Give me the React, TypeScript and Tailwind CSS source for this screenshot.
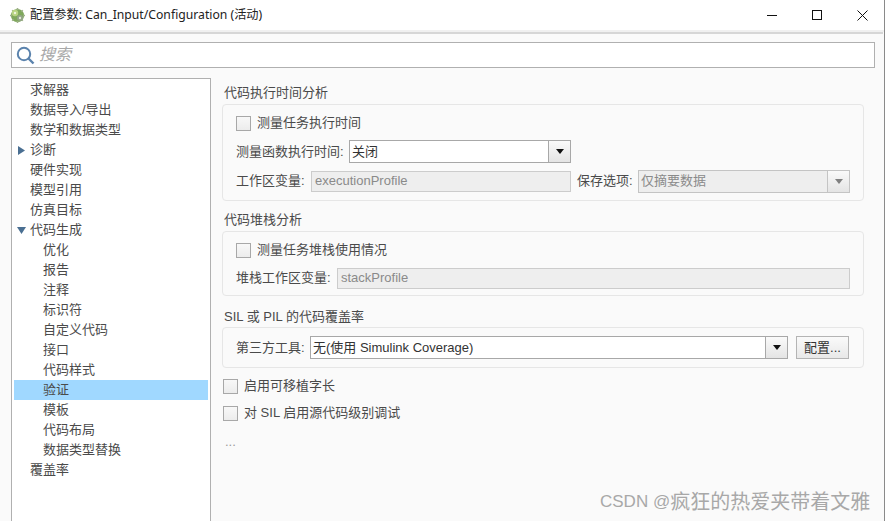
import React from 'react';

const tree = [
  { label: '求解器', level: 0 },
  { label: '数据导入/导出', level: 0 },
  { label: '数学和数据类型', level: 0 },
  { label: '诊断', level: 0, arrow: 'right' },
  { label: '硬件实现', level: 0 },
  { label: '模型引用', level: 0 },
  { label: '仿真目标', level: 0 },
  { label: '代码生成', level: 0, arrow: 'down' },
  { label: '优化', level: 1 },
  { label: '报告', level: 1 },
  { label: '注释', level: 1 },
  { label: '标识符', level: 1 },
  { label: '自定义代码', level: 1 },
  { label: '接口', level: 1 },
  { label: '代码样式', level: 1 },
  { label: '验证', level: 1, selected: true },
  { label: '模板', level: 1 },
  { label: '代码布局', level: 1 },
  { label: '数据类型替换', level: 1 },
  { label: '覆盖率', level: 0 },
];

const Check: React.FC<{ label: string }> = ({ label }) => (
  <div className="flex items-center gap-[6px] h-[16px]">
    <div className="w-[15px] h-[15px] shrink-0 border border-[#a8a8a8] bg-gradient-to-b from-[#f8f8f8] to-[#ececec]"></div>
    <span>{label}</span>
  </div>
);

const Arrow: React.FC<{ disabled?: boolean }> = ({ disabled }) => (
  <div className={`w-[22px] self-stretch border-l flex items-center justify-center bg-gradient-to-b from-[#fafafa] to-[#e4e4e4] ${disabled ? 'border-[#c4c4c4]' : 'border-[#a8a8a8]'}`}>
    <svg width="8" height="5" viewBox="0 0 8 5">
      <path d="M0 0H8L4 5Z" fill={disabled ? '#808080' : '#111111'} />
    </svg>
  </div>
);

const App: React.FC = () => {
  return (
    <div className="relative w-[887px] h-[521px] overflow-hidden flex flex-col bg-[#fafafa] text-[13px] leading-[16px] text-[#4a4a4a] font-['Liberation_Sans','Noto_Sans_CJK_SC',sans-serif]">
      {/* Title bar */}
      <div className="h-[30px] shrink-0 bg-white flex items-center pl-[10px] text-[#222222] font-['Noto_Sans','Noto_Sans_CJK_SC',sans-serif] text-[12.2px]">
        <svg width="15" height="15" viewBox="0 0 15 15" className="mr-[5px]">
          <circle cx="7.5" cy="7.5" r="6.6" fill="#7fa85c" />
          <path d="M7.5 0V2M7.5 13V15M0 7.5H2M13 7.5H15M2.2 2.2L3.6 3.6M11.4 11.4L12.8 12.8M12.8 2.2L11.4 3.6M3.6 11.4L2.2 12.8" stroke="#9db088" strokeWidth="1.6" />
          <circle cx="5" cy="5" r="3.2" fill="#b9d483" />
          <circle cx="10" cy="10" r="3" fill="#93a588" />
          <circle cx="5" cy="5" r="1.2" fill="#eef4dd" />
          <circle cx="10" cy="10" r="1.2" fill="#e4ead8" />
        </svg>
        <span>配置参数: Can_Input/Configuration (活动)</span>
        <div className="ml-auto flex items-center mr-[19px] gap-[35px]">
          <svg width="10" height="10" viewBox="0 0 10 10"><path d="M0 5.5H10" stroke="#111" strokeWidth="1" /></svg>
          <svg width="10" height="10" viewBox="0 0 10 10"><rect x="0.5" y="0.5" width="9" height="9" fill="none" stroke="#111" /></svg>
          <svg width="11" height="11" viewBox="0 0 11 11"><path d="M0.5 0.5L10.5 10.5M10.5 0.5L0.5 10.5" stroke="#111" strokeWidth="1" /></svg>
        </div>
      </div>
      <div className="h-[2px] shrink-0 bg-[#f0f0f0]"></div>
      <div className="h-[2px] shrink-0 bg-[#d6d6d6] mr-[4px]"></div>

      <div className="flex-1 min-h-0 flex flex-col pl-[11px] pr-[12px] pt-[8px]">
        {/* Search */}
        <div className="h-[26px] shrink-0 bg-white border border-[#b0b0b0] flex items-center pl-[4px] italic text-[#a8a8a8] text-[16px]">
          <svg width="19" height="19" viewBox="0 0 19 19" className="mr-[4px]">
            <circle cx="8" cy="8" r="6.2" fill="none" stroke="#5b83ad" strokeWidth="2" />
            <path d="M12.5 12.5L17.5 17.5" stroke="#5b83ad" strokeWidth="2.4" />
          </svg>
          <span>搜索</span>
        </div>

        <div className="flex-1 min-h-0 flex mt-[10px]">
          {/* Tree */}
          <div className="w-[200px] shrink-0 bg-white border border-[#b0b0b0] border-b-0 pt-[1px] pl-[2px] pr-[2px]">
            {tree.map((item) => (
              <div
                key={item.label}
                className={`h-[20px] flex items-center relative ${item.level === 1 ? 'pl-[29px]' : 'pl-[16px]'} ${item.selected ? 'bg-[#a0d8ff]' : ''}`}
              >
                {item.arrow === 'right' && (
                  <svg width="7" height="9" viewBox="0 0 7 9" className="absolute left-[4px] top-[6px]">
                    <path d="M0 0L7 4.5L0 9Z" fill="#4a6f92" />
                  </svg>
                )}
                {item.arrow === 'down' && (
                  <svg width="9" height="7" viewBox="0 0 9 7" className="absolute left-[3px] top-[7px]">
                    <path d="M0 0H9L4.5 7Z" fill="#4a6f92" />
                  </svg>
                )}
                <span>{item.label}</span>
              </div>
            ))}
          </div>

          {/* Right pane */}
          <div className="flex-1 min-w-0 pl-[11px] pr-[11px] pt-[7px]">
            <div className="pl-[2px] h-[16px]">代码执行时间分析</div>
            <div className="mt-[3px] h-[97px] border border-[#e6e6e6] rounded-[4px] pl-[13px] pr-[13px] pt-[10px] flex flex-col">
              <Check label="测量任务执行时间" />
              <div className="flex items-center mt-[9px] h-[23px]">
                <span className="w-[113px] shrink-0">测量函数执行时间:</span>
                <div className="w-[222px] h-[23px] flex items-center bg-white border border-[#a8a8a8] pl-[2px]">
                  <span className="flex-1 text-[#333333]">关闭</span>
                  <Arrow />
                </div>
              </div>
              <div className="flex items-center mt-[7px] h-[22px]">
                <span className="w-[75px] shrink-0">工作区变量:</span>
                <div className="w-[260px] h-[21px] bg-[#eeeeee] border border-[#cccccc] text-[#8a8a8a] pl-[3px] flex items-center">executionProfile</div>
                <span className="ml-[6px] w-[61px] shrink-0">保存选项:</span>
                <div className="w-[212px] h-[23px] flex items-center bg-[#eeeeee] border border-[#c4c4c4] pl-[2px] text-[#8a8a8a]">
                  <span className="flex-1">仅摘要数据</span>
                  <Arrow disabled />
                </div>
              </div>
            </div>

            <div className="pl-[2px] h-[16px] mt-[11px]">代码堆栈分析</div>
            <div className="mt-[3px] h-[65px] border border-[#e6e6e6] rounded-[4px] pl-[13px] pr-[13px] pt-[10px] flex flex-col">
              <Check label="测量任务堆栈使用情况" />
              <div className="flex items-center mt-[9px] h-[22px]">
                <span className="w-[101px] shrink-0">堆栈工作区变量:</span>
                <div className="flex-1 h-[21px] bg-[#eeeeee] border border-[#cccccc] text-[#8a8a8a] pl-[3px] flex items-center">stackProfile</div>
              </div>
            </div>

            <div className="pl-[2px] h-[16px] mt-[13px]">SIL 或 PIL 的代码覆盖率</div>
            <div className="mt-[2px] h-[41px] border border-[#e6e6e6] rounded-[4px] pl-[13px] pr-[14px] flex items-center">
              <span className="w-[74px] shrink-0">第三方工具:</span>
              <div className="w-[478px] shrink-0 h-[23px] flex items-center bg-white border border-[#a8a8a8] pl-[2px]">
                <span className="flex-1 text-[#333333]">无(使用 Simulink Coverage)</span>
                <Arrow />
              </div>
              <div className="ml-[8px] w-[53px] shrink-0 h-[23px] border border-[#b4b4b4] bg-gradient-to-b from-[#fafafa] to-[#e8e8e8] flex items-center justify-center text-[#333333]">配置...</div>
            </div>

            <div className="mt-[10px] pl-[1px]"><Check label="启用可移植字长" /></div>
            <div className="mt-[11px] pl-[1px]"><Check label="对 SIL 启用源代码级别调试" /></div>
            <div className="mt-[13px] pl-[3px] text-[#9a9a9a]">...</div>
          </div>
        </div>
      </div>

      {/* Watermark over the page */}
      <div className="absolute left-[600px] top-[491px] flex items-center h-[22px] text-[17px] text-[#a8a8a8]">
        <span>CSDN @</span>
        <span className="text-[20px]">疯狂的热爱夹带着文雅</span>
      </div>
      {/* Edge of the window behind */}
      <div className="absolute right-0 top-0 bottom-0 w-[3px] bg-white border-l border-[#8a8a8a]"></div>
    </div>
  );
};

export default App;
